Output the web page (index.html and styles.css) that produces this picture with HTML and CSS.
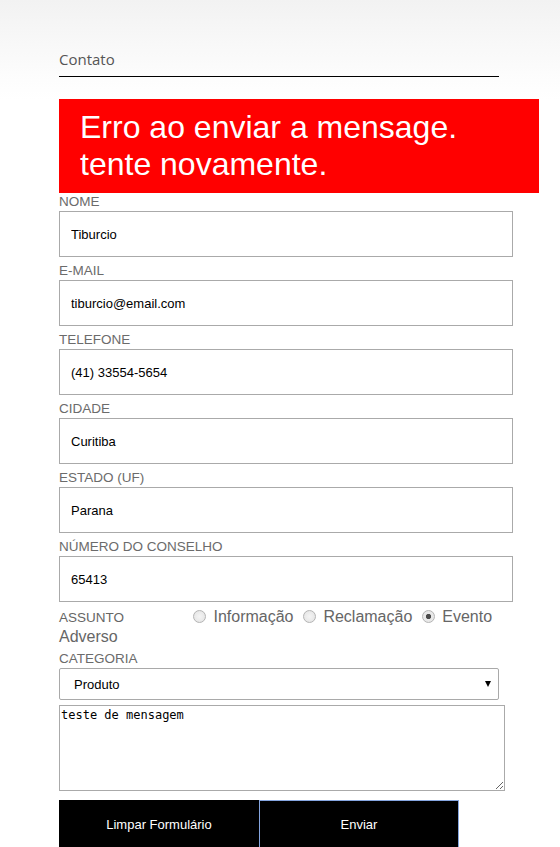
FILE: index.html
```html
<!DOCTYPE html>
<html lang="pt">
<head>
<meta charset="utf-8">
<title>Contato</title>
<link rel="stylesheet" href="styles.css">
</head>
<body>
<div class="page">
  <h2 class="title">Contato</h2>
  <div class="error">Erro ao enviar a mensage.<br>tente novamente.</div>
  <form class="form">
    <label class="label">Nome</label>
    <input class="field" type="text" value="Tiburcio">
    <label class="label">E-mail</label>
    <input class="field" type="text" value="tiburcio@email.com">
    <label class="label">Telefone</label>
    <input class="field" type="text" value="(41) 33554-5654">
    <label class="label">Cidade</label>
    <input class="field" type="text" value="Curitiba">
    <label class="label">Estado (UF)</label>
    <input class="field" type="text" value="Parana">
    <label class="label">Número do conselho</label>
    <input class="field" type="text" value="65413">
    <div class="radios"><span class="radios-label">ASSUNTO</span><input class="radio" type="radio" name="a"> Informação <input class="radio" type="radio" name="a"> Reclamação <input class="radio" type="radio" name="a" checked> Evento Adverso</div>
    <label class="label label-cat">Categoria</label>
    <div class="select-wrap">
      <select class="select"><option>Produto</option></select>
      <span class="arrow"></span>
    </div>
    <textarea class="message">teste de mensagem</textarea>
    <div class="buttons">
      <button type="button" class="btn btn-clear">Limpar Formulário</button>
      <button type="button" class="btn btn-send">Enviar</button>
    </div>
  </form>
</div>
</body>
</html>
```
FILE: styles.css
```css
html, body {
  margin: 0;
  padding: 0;
}
body {
  background: linear-gradient(to bottom, #f2f2f2 0px, #fdfdfd 80px, #ffffff 100px) no-repeat;
  font-family: "Liberation Sans", Arial, sans-serif;
  overflow: hidden;
}
.page {
  padding-left: 59px;
  width: 440px;
}
.title {
  margin: 0;
  padding: 49px 0 7px 0;
  font-family: "Open Sans", sans-serif;
  font-weight: normal;
  font-size: 15px;
  line-height: 20px;
  color: #555;
  border-bottom: 1px solid #000;
}
.error {
  margin-top: 22px;
  width: 480px;
  box-sizing: border-box;
  padding: 10px 0 10px 21px;
  background: #ff0000;
  color: #fff;
  font-size: 32px;
  line-height: 37px;
}
.form {
  margin: 0;
}
.label {
  display: block;
  font-size: 13.5px;
  line-height: 18px;
  color: #6b6b6b;
  text-transform: uppercase;
}
.field {
  display: block;
  width: 454px;
  height: 46px;
  box-sizing: border-box;
  margin: 0 0 5px 0;
  padding: 0 11px;
  border: 1px solid #aaa;
  border-radius: 0;
  font-family: "Liberation Sans", Arial, sans-serif;
  font-size: 13px;
  color: #000;
  background: #fff;
  outline: none;
}
.radios {
  margin-top: 1px;
  font-size: 16px;
  line-height: 19px;
  color: #666;
  width: 440px;
}
.radios-label {
  display: inline-block;
  width: 129px;
  font-size: 13.5px;
}
.radio {
  appearance: none;
  -webkit-appearance: none;
  width: 13px;
  height: 13px;
  box-sizing: border-box;
  margin: 0 3px 0 5px;
  border: 1px solid #b4b4b4;
  border-radius: 50%;
  background: radial-gradient(circle, #f4f4f4 0, #e2e2e2 100%);
  vertical-align: -1px;
}
.radio:checked {
  background: radial-gradient(circle, #4a4a4a 0, #4a4a4a 2.2px, #e8e8e8 3px, #e8e8e8 100%);
}
.label-cat {
  margin-top: 4px;
}
.select-wrap {
  position: relative;
  width: 440px;
  height: 32px;
  margin-bottom: 5px;
}
.select {
  appearance: none;
  -webkit-appearance: none;
  display: block;
  width: 440px;
  height: 32px;
  box-sizing: border-box;
  border: 1px solid #a9a9a9;
  border-radius: 2px;
  background: #fff;
  padding: 0 0 0 14px;
  font-family: "Liberation Sans", Arial, sans-serif;
  font-size: 13px;
  color: #000;
}
.arrow {
  position: absolute;
  right: 8px;
  top: 13px;
  width: 0;
  height: 0;
  border-left: 3.5px solid transparent;
  border-right: 3.5px solid transparent;
  border-top: 6px solid #000;
}
.message {
  display: block;
  width: 446px;
  height: 86px;
  box-sizing: border-box;
  margin: 0;
  padding: 2px 1px;
  border: 1px solid #aaa;
  font-family: "DejaVu Sans Mono", "Liberation Mono", monospace;
  font-size: 12px;
  line-height: 14px;
  color: #000;
}
.buttons {
  display: flex;
  margin-top: 9px;
}
.btn {
  width: 200px;
  height: 48px;
  box-sizing: border-box;
  margin: 0;
  background: #000;
  color: #fff;
  font-family: "Liberation Sans", Arial, sans-serif;
  font-size: 13px;
  border: 1px solid #000;
  padding: 0;
}
.btn-send {
  border: 1px solid #86a6e0;
}
```
